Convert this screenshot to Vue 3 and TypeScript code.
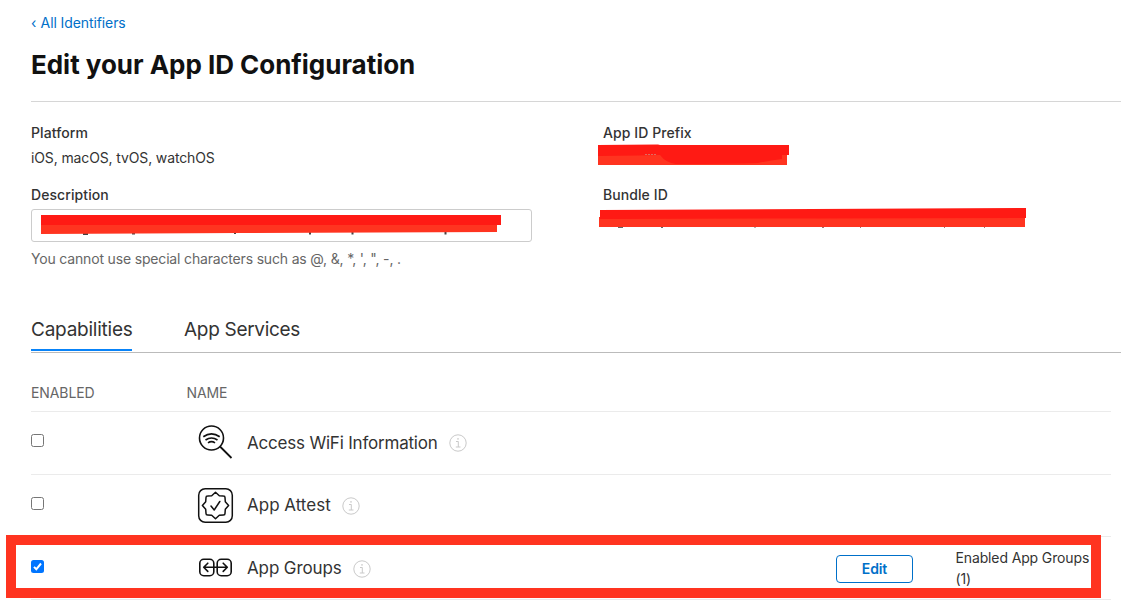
<script setup lang="ts">
interface Capability {
  id: string
  name: string
  enabled: boolean
  groups?: string
}

const capabilities: Capability[] = [
  { id: 'wifi', name: 'Access WiFi Information', enabled: false },
  { id: 'attest', name: 'App Attest', enabled: false },
  { id: 'groups', name: 'App Groups', enabled: true, groups: 'Enabled App Groups (1)' },
]
</script>

<template>
  <main class="page">
    <a class="back"><span class="chevron">‹</span> All Identifiers</a>
    <h1><span>Edit your App ID Configuration</span></h1>

    <section class="details">
      <div class="column">
        <div class="label platform-label">Platform</div>
        <div class="value">iOS, macOS, tvOS, watchOS</div>
        <div class="label description-label">Description</div>
        <div class="field">
          <svg class="mark" width="464" height="24" viewBox="0 0 464 24">
            <path d="M42 18h5v2h-5zM91 18h3v1.500h-3zM193 17h2v2h-2zM268 17h2v2.500h-2zM310.500 17h2v2.500h-2zM403.500 17h2v2.500h-2z" fill="#444" />
            <path d="M0 10H456V17L200 18L0 19Z" fill="#ff3420" />
            <path d="M0 0H460V10H0Z" fill="#ff1a14" />
          </svg>
        </div>
        <div class="hint">You cannot use special characters such as @, &amp;, *, ', ", -, .</div>
      </div>
      <div class="column">
        <div class="label platform-label">App ID Prefix</div>
        <div class="redacted">
          <svg class="mark prefix-mark" width="192" height="22" viewBox="0 0 192 22">
            <path d="M0 10H189V20H0Z" fill="#ff3420" />
            <path d="M0 0L60 -.5L62 0H191V10H184V14Q170 16 160 18Q130 19 78 19Q68 18 62 10L40 10.500L0 11Z" fill="#ff1a14" />
            <path d="M47 9.500h12" stroke="#e06a60" stroke-width="1" stroke-dasharray="2 1" />
          </svg>
        </div>
        <div class="label description-label">Bundle ID</div>
        <div class="redacted">
          <svg class="mark bundle-mark" width="428" height="22" viewBox="0 0 428 22">
            <path d="M19 18h5v2h-5zM62 19h2v1h-2zM155.500 19h1v1h-1z" fill="#666" />
            <path d="M223 18h2v2h-2zM261 18h1v2h-1zM345 18h1v2h-1zM385 18h1v2h-1z" fill="#9d7774" />
            <path d="M0 9H426V19H0Z" fill="#ff3420" />
            <path d="M1 2L214 1L427 0V10L214 10.500L1 11Z" fill="#ff1a14" />
          </svg>
        </div>
      </div>
    </section>

    <nav class="tabs">
      <a class="tab active">Capabilities</a>
      <a class="tab">App Services</a>
    </nav>

    <section class="table">
      <div class="row head">
        <span>ENABLED</span>
        <span class="name-head">NAME</span>
      </div>
      <div v-for="item in capabilities" :key="item.id" class="row item" :class="item.id">
        <span class="check" :class="{ checked: item.enabled }">
          <svg v-if="item.enabled" width="13" height="13" viewBox="0 0 13 13">
            <path d="M3 6.900L5.300 9.300L10 3.500" fill="none" stroke="#fff" stroke-width="2" />
          </svg>
        </span>
        <div class="capability">
          <svg class="icon" width="38" height="38" viewBox="0 0 38 38" fill="none" stroke="#111">
            <g v-if="item.id === 'wifi'" stroke-width="1.600">
              <circle cx="14.500" cy="14" r="12" />
              <path d="M23 22.500L34.500 34" stroke-width="1.800" />
              <path d="M6.300 12.700Q14.500 7.200 22.700 12.700M8.500 16Q14.500 12 20.500 16M11 18.900Q14.500 16.500 18 18.900" stroke-width="1.700" />
            </g>
            <g v-else-if="item.id === 'attest'" stroke-width="1.500" stroke-linejoin="round" stroke-linecap="round">
              <rect x="1.700" y="1.700" width="33.600" height="33.600" rx="6.500" />
              <path d="M18.500 5.300L22.300 8.700L26.500 9Q28 9 28 10.500L28.300 14.700L31.600 18.500L28.300 22.300L28 26.500Q28 28 26.500 28L22.300 28.300L18.500 31.700L14.700 28.300L10.500 28Q9 28 9 26.500L8.700 22.300L5.400 18.500L8.700 14.700L9 10.500Q9 9 10.500 9L14.700 8.700Z" />
              <path d="M14 19L17.200 23L22.800 14.500" />
            </g>
            <g v-else stroke-width="1.600" stroke-linecap="round" stroke-linejoin="round">
              <rect x="2.800" y="10.300" width="14" height="16.400" rx="4" />
              <rect x="20.200" y="10.300" width="14" height="16.400" rx="4" />
              <path d="M7 18.300H30M10.800 14.200L6.700 18.300L10.800 22.400M26.200 14.200L30.300 18.300L26.200 22.400" />
            </g>
          </svg>
          <span class="name">{{ item.name }}</span>
          <svg class="info" width="18" height="18" viewBox="0 0 18 18" fill="none" stroke="#c9c9c9">
            <circle cx="9" cy="9" r="8.200" />
            <path d="M7 7.500H9.300V13M6.800 13H11.500" />
            <circle cx="9" cy="4.900" r=".8" fill="#c9c9c9" stroke="none" />
          </svg>
        </div>
        <button v-if="item.groups" class="edit">Edit</button>
        <div v-if="item.groups" class="groups-count">{{ item.groups }}</div>
      </div>
      <div class="highlight"></div>
    </section>
  </main>
</template>

<style>
body { overflow: hidden; background: #fff; }
</style>

<style scoped>
.page {
  box-sizing: border-box;
  width: 1121px;
  height: 610px;
  padding-left: 31px;
  overflow: hidden;
  background: #fff;
  color: #333;
  font-family: Inter, "Liberation Sans", sans-serif;
  font-size: 14px;
}
.back {
  display: block;
  height: 20px;
  padding-top: 13px;
  line-height: 20px;
  color: #0070c9;
  letter-spacing: -.1px;
}
.chevron { margin-right: .5px; }
h1 {
  height: 68px;
  margin: 0;
  border-bottom: 1px solid #d6d6d6;
  color: #111;
  font-size: 26px;
  font-weight: 700;
  line-height: 64px;
  letter-spacing: -.03px;
}
.details {
  display: grid;
  grid-template-columns: 572px 1fr;
  height: 208px;
}
.label { font-weight: 500; line-height: 20px; height: 20px; letter-spacing: .08px; }
.platform-label { margin-top: 21px; }
.value { height: 20px; margin-top: 5px; line-height: 20px; letter-spacing: -.13px; }
.description-label { margin-top: 17px; }
.field {
  box-sizing: border-box;
  width: 501px;
  height: 33px;
  margin-top: 4px;
  padding: 5px 9px;
  border: 1px solid #ccc;
  border-radius: 3px;
}
.mark { display: block; overflow: visible; }
.hint { margin-top: 7px; line-height: 20px; color: #666; letter-spacing: -.17px; }
.redacted { box-sizing: border-box; height: 25px; padding-top: 2px; }
.prefix-mark { margin-left: -5px; }
.bundle-mark { margin: 1px 0 0 -4px; }
.tabs {
  display: flex;
  gap: 52px;
  box-sizing: border-box;
  height: 43px;
  border-bottom: 1px solid #bbb;
  font-size: 19px;
  line-height: 40px;
}
.tab { box-sizing: border-box; height: 41px; letter-spacing: -.3px; white-space: nowrap; }
.active { width: 101px; border-bottom: 2px solid #0883f8; letter-spacing: -.24px; }
.table { position: relative; width: 1080px; }
.row {
  display: grid;
  grid-template-columns: 155px 650px 77px 1fr;
  box-sizing: border-box;
  border-bottom: 1px solid #ebebeb;
}
.head {
  height: 59px;
  padding-top: 30px;
  line-height: 20px;
  color: #666;
  letter-spacing: -.1px;
}
.name-head { padding-left: .5px; }
.item { height: 63px; }
.attest { height: 62px; }
.check {
  box-sizing: border-box;
  width: 13px;
  height: 13px;
  margin-top: 22px;
  border: 1px solid #767676;
  border-radius: 2.5px;
}
.groups .check { margin-top: 23px; }
.checked { border: 0; background: #0075ff; }
.check svg { display: block; }
.capability { display: flex; align-items: center; height: 62px; padding-left: 11px; }
.icon { flex: none; }
.name { margin-left: 12px; font-size: 17px; letter-spacing: -.2px; white-space: nowrap; }
.attest .name { margin-bottom: 2px; letter-spacing: 0; }
.groups .name { letter-spacing: -.12px; }
.info { margin-left: 11px; }
.groups .info { margin-top: 1px; }
.edit {
  width: 77px;
  height: 28px;
  margin-top: 18px;
  padding: 0;
  border: 1px solid #0070c9;
  border-radius: 4px;
  background: #fff;
  color: #0070c9;
  font: 600 14px/26px Inter, "Liberation Sans", sans-serif;
  letter-spacing: -.1px;
}
.groups-count {
  width: 145px;
  margin: 10px 0 0 42.5px;
  line-height: 21px;
  letter-spacing: -.13px;
}
.highlight {
  position: absolute;
  left: -25px;
  top: 182px;
  box-sizing: border-box;
  width: 1095px;
  height: 63px;
  border: 10px solid #ff3420;
}
</style>
